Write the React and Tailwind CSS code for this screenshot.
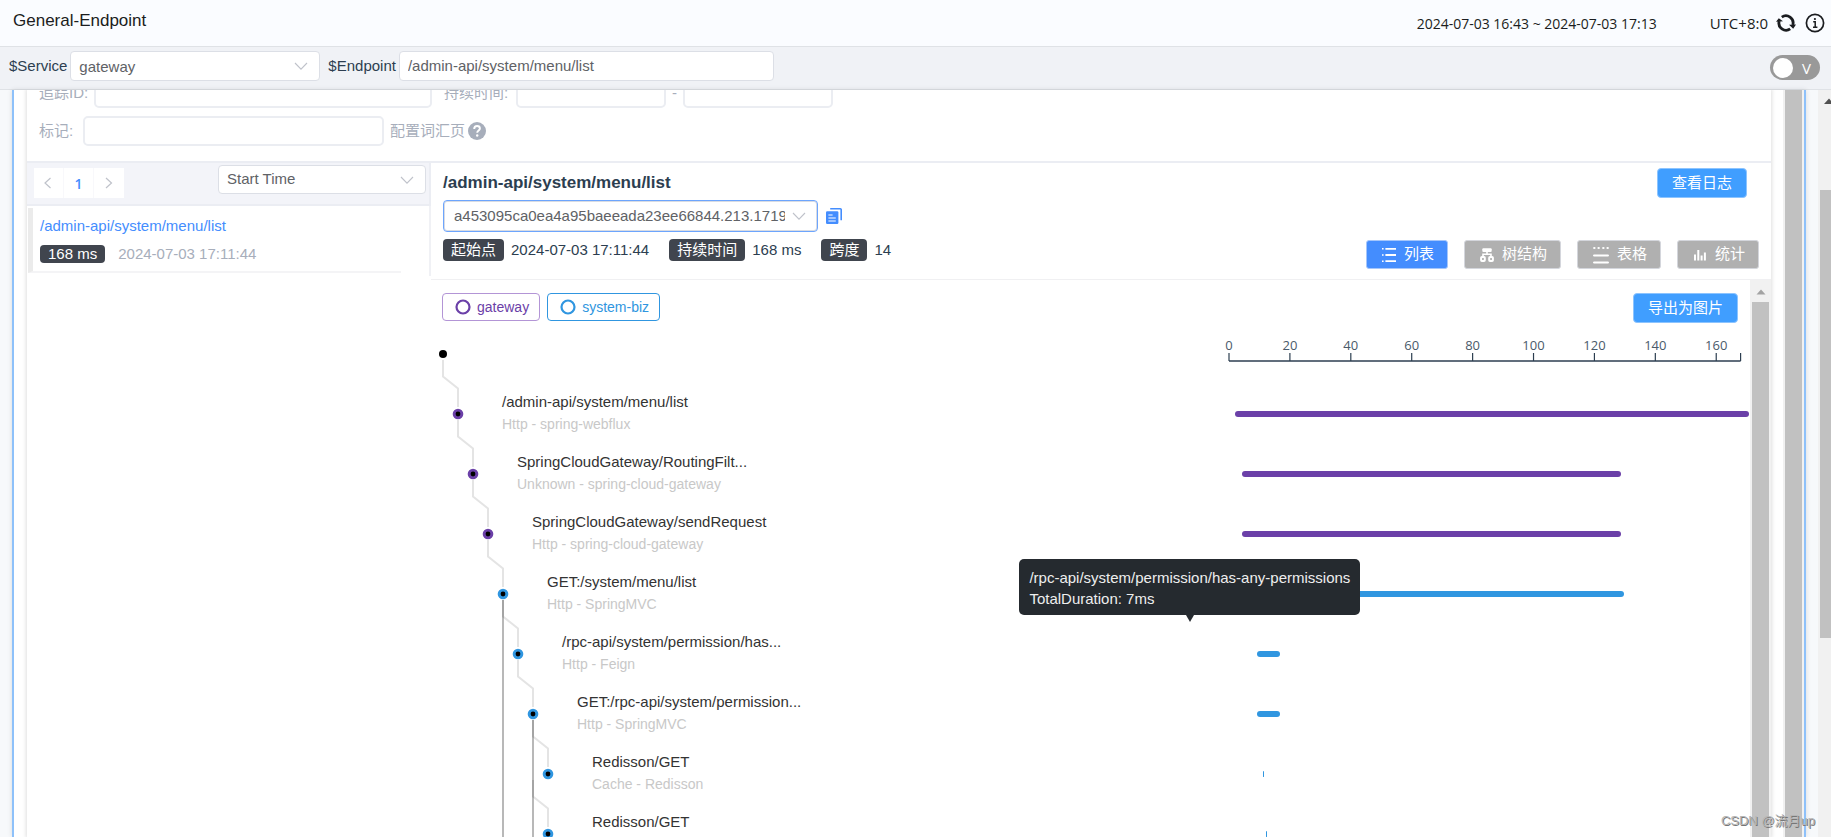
import React from "react";

const PURPLE = "#6b40a8";
const BLUE = "#3096e0";
const TOTAL = 168;

const spans = [
  { depth: 1, name: "/admin-api/system/menu/list", meta: "Http - spring-webflux", start: 0, duration: 168, color: PURPLE },
  { depth: 2, name: "SpringCloudGateway/RoutingFilt...", meta: "Unknown - spring-cloud-gateway", start: 2, duration: 124, color: PURPLE },
  { depth: 3, name: "SpringCloudGateway/sendRequest", meta: "Http - spring-cloud-gateway", start: 2, duration: 124, color: PURPLE },
  { depth: 4, name: "GET:/system/menu/list", meta: "Http - SpringMVC", start: 3, duration: 124, color: BLUE },
  {
    depth: 5,
    name: "/rpc-api/system/permission/has...",
    meta: "Http - Feign",
    start: 7,
    duration: 7.5,
    color: BLUE,
    tip: ["/rpc-api/system/permission/has-any-permissions", "TotalDuration: 7ms"],
  },
  { depth: 6, name: "GET:/rpc-api/system/permission...", meta: "Http - SpringMVC", start: 7, duration: 7.5, color: BLUE },
  { depth: 7, name: "Redisson/GET", meta: "Cache - Redisson", start: 9, duration: 0.4, color: BLUE },
  { depth: 7, name: "Redisson/GET", meta: "Cache - Redisson", start: 10, duration: 0.4, color: BLUE },
];

const ticks = [0, 20, 40, 60, 80, 100, 120, 140, 160];

function Chevron({ className }) {
  return (
    <svg viewBox="0 0 14 14" className={`pointer-events-none absolute top-1/2 size-[14px] -translate-y-1/2 ${className}`} fill="none" stroke="#bfc2ca" strokeWidth="1.1">
      <path d="M1 4l6 6.2L13 4" />
    </svg>
  );
}

function Select({ id, label, value, className, focused }) {
  return (
    <div className={`relative ${className}`}>
      <select
        id={id}
        aria-label={label}
        className={`block h-full w-full appearance-none overflow-hidden rounded-[4px] border bg-white pr-8 text-[15px] text-[#606266] outline-none ${
          focused ? "border-[#6da5fd] pl-2.5 shadow-[inset_0_0_0_1px_#d9dce3]" : "border-[#dcdfe6] pl-2"
        }`}
      >
        <option>{value}</option>
      </select>
      <Chevron className="right-3" />
    </div>
  );
}

function FilterInput({ id, label, className }) {
  return <input id={id} aria-label={label} className={`h-[30px] rounded-[5px] border-2 border-[#ebedf2] bg-white px-2 outline-none ${className}`} />;
}

function RefreshIcon() {
  return (
    <svg viewBox="0 0 20 20" className="size-5" fill="none" stroke="#1b1d20" strokeWidth="2.8">
      <path d="M14.200 15.900A7.200 7.200 0 0 1 3.200 8" />
      <path d="M5.800 4.100A7.200 7.200 0 0 1 16.800 12" />
      <path d="M0 8.800L2.800 5.200 7 8.200zM13 11.800l7-.4-2.800 4.400z" fill="#1b1d20" stroke="none" />
    </svg>
  );
}

function InfoIcon() {
  return (
    <svg viewBox="0 0 20 20" className="size-5" fill="none" stroke="#1b1d20">
      <circle cx="10" cy="10" r="8.6" strokeWidth="1.7" />
      <path d="M8.2 8.8h2v5.4M8 14.2h4.4" strokeWidth="1.5" />
      <circle cx="9.9" cy="6" r="1.1" fill="#1b1d20" stroke="none" />
    </svg>
  );
}

function CopyIcon() {
  return (
    <svg viewBox="0 0 16 16" className="size-4" fill="none">
      <path d="M4.2.8h10.2c.5 0 .8.3.8.8v10.6" stroke="#448dfe" strokeWidth="1.6" />
      <rect x="0" y="3.2" width="12.4" height="12.8" rx="1.2" fill="#448dfe" />
      <path d="M2.4 7h4.2M2.4 10h7.4M2.4 13h7.4" stroke="#fff" strokeWidth="1.2" />
    </svg>
  );
}

function ListIcon() {
  return (
    <svg viewBox="0 0 14 14" className="size-[14px]" fill="#fff">
      <path d="M0 0h1.6v1.6H0zM0 6.2h1.6v1.6H0zM0 12.4h1.6V14H0zM3.4 0H14v1.8H3.4zM3.4 6.1H14v1.8H3.4zM3.4 12.2H14V14H3.4z" />
    </svg>
  );
}

function TreeIcon() {
  return (
    <svg viewBox="0 0 14 14" className="size-[14px]" fill="none" stroke="#fff">
      <rect x="2.300" y="0.300" width="9.400" height="3.600" rx="1" fill="#fff" stroke="none" />
      <path d="M7 3.500v2.800M3 9V6.300h8V9" strokeWidth="1.600" />
      <rect x="1.100" y="8.900" width="3.700" height="4.100" rx=".8" strokeWidth="2" />
      <rect x="9.200" y="8.900" width="3.700" height="4.100" rx=".8" strokeWidth="2" />
    </svg>
  );
}

function TableIcon() {
  return (
    <svg viewBox="0 0 16 18" className="h-[18px] w-4" fill="none" stroke="#fff" strokeLinecap="round">
      <path d="M1.200 2h.3M5.500 2h.3M10.200 2h.3M14.500 2h.3" strokeWidth="2.200" />
      <path d="M1.100 9.500h13.800M1.100 16.500h13.800" strokeWidth="2.200" />
    </svg>
  );
}

function StatsIcon() {
  return (
    <svg viewBox="0 0 14 12" className="h-3 w-[14px]" fill="none" stroke="#fff" strokeWidth="2">
      <path d="M2 11.500v-6M5.300 11.500V1M8.600 11.500V6.500M11.900 11.500V3.400" />
    </svg>
  );
}

const modes = [
  { label: "列表", icon: ListIcon, active: true },
  { label: "树结构", icon: TreeIcon },
  { label: "表格", icon: TableIcon },
  { label: "统计", icon: StatsIcon },
];

function Tag({ children }) {
  return <span className="flex h-[22px] items-center rounded-[4px] bg-[#40454e] px-2 text-[15px] text-white">{children}</span>;
}

function Legend({ name, className }) {
  return (
    <span className={`flex h-7 items-center gap-1.5 rounded-[4px] border pr-2.5 pl-3 text-[14px] ${className}`}>
      <svg viewBox="0 0 16 16" className="size-4" fill="none" stroke="currentColor" strokeWidth="2.2">
        <circle cx="8" cy="8" r="6.5" />
      </svg>
      {name}
    </span>
  );
}

function Connectors() {
  const height = spans.length * 60 + 120;
  return (
    <svg width="240" height={height} className="pointer-events-none absolute top-0 left-0">
      {spans.map((n, i) => {
        const x = 12 + n.depth * 15;
        const y = 70 + i * 60;
        return <path key={i} d={`M${x - 15} ${y - 54}v16.500l15 12V${y - 7}`} fill="none" stroke="#e4e4e4" strokeWidth="2" />;
      })}
      <path d={`M72 256V${height}M102 376V${height}`} stroke="#000" strokeOpacity=".28" strokeWidth="2" />
      <circle cx="12" cy="10" r="4" />
      {spans.map((n, i) => {
        const x = 12 + n.depth * 15;
        const y = 70 + i * 60;
        return (
          <g key={i}>
            <circle cx={x} cy={y} r="5.300" fill={n.color} />
            <circle cx={x} cy={y} r="2.400" />
          </g>
        );
      })}
    </svg>
  );
}

function Axis() {
  return (
    <svg className="block h-7 w-full overflow-visible" fill="none">
      <line x1="0" x2="100%" y1="26" y2="26" stroke="#2c3e50" strokeWidth="1.500" />
      {[...ticks, TOTAL].map((t) => (
        <line key={t} x1={`${(t / TOTAL) * 100}%`} x2={`${(t / TOTAL) * 100}%`} y1="18" y2="26" stroke="#2c3e50" strokeWidth="1.200" />
      ))}
      {ticks.map((t) => (
        <text key={t} x={`${(t / TOTAL) * 100}%`} y="15" textAnchor="middle" fontSize="13" fill="#4a5a6a" className="font-['Open_Sans',sans-serif]">
          {t}
        </text>
      ))}
    </svg>
  );
}

function SpanRow({ span }) {
  const indent = 56 + span.depth * 15;
  return (
    <li className="flex h-[60px]">
      <div className="w-3/5 leading-[22px]" style={{ paddingLeft: indent }}>
        <div className="pt-[7px] text-[15px] text-[#333]">{span.name}</div>
        <div className="text-[14px] text-[#c8c8c8]">{span.meta}</div>
      </div>
      <div className="relative flex w-2/5 items-start pt-[27px] pr-px pl-[13px]">
        <div className="flex h-[6px] w-full">
          <div
            className="h-full rounded-[3px]"
            style={{ marginLeft: `${(span.start / TOTAL) * 100}%`, width: `${(span.duration / TOTAL) * 100}%`, backgroundColor: span.color }}
          />
        </div>
        {span.tip && (
          <div role="tooltip" className="absolute bottom-full left-[-203px] mb-[9px] rounded-[5px] bg-[#252a2f] px-2.5 pt-2 pb-1.5 text-[15px] leading-[21px] whitespace-nowrap text-[#eee]">
            {span.tip.map((line) => (
              <div key={line}>{line}</div>
            ))}
            <svg viewBox="0 0 8 7" className="absolute top-full left-1/2 h-[7px] w-2 -translate-x-1/2" fill="#252a2f">
              <path d="M0 0h8L4 7z" />
            </svg>
          </div>
        )}
      </div>
    </li>
  );
}

export default function App() {
  return (
    <div className="relative flex h-screen flex-col overflow-hidden bg-[#f7f9fb] font-['Liberation_Sans','Noto_Sans_CJK_SC',sans-serif] text-[15px] text-[#2c3e50]">
      <header className="flex h-[47px] shrink-0 items-center justify-between border-b border-[#dfe2e6] bg-[#fafcff] pr-1.5 pl-[13px] text-[#1b1d20]">
        <h1 className="pb-1 text-[17px]">General-Endpoint</h1>
        <div className="flex items-center font-['Open_Sans',sans-serif] text-[14px]">
          <span>2024-07-03 16:43 ~ 2024-07-03 17:13</span>
          <span className="pr-2 pl-[53px] text-[15px]">UTC+8:0</span>
          <button aria-label="Refresh" className="mr-[9px]">
            <RefreshIcon />
          </button>
          <button aria-label="Info">
            <InfoIcon />
          </button>
        </div>
      </header>

      <div className="flex h-[43px] shrink-0 items-start border-b border-[#dfe2e6] bg-[#f0f2f6] pt-1 pr-[11px] pl-[9px] leading-[30px]">
        <label htmlFor="service" className="pr-[3px]">$Service</label>
        <Select id="service" label="Service" value="gateway" className="h-[30px] w-[250px]" />
        <label htmlFor="endpoint" className="pr-[3px] pl-2">$Endpoint</label>
        <input id="endpoint" defaultValue="/admin-api/system/menu/list" className="h-[30px] w-[375px] rounded-[4px] border border-[#dcdfe6] bg-white px-2 text-[15px] text-[#606266] outline-none" />
        <button role="switch" aria-checked="false" aria-label="View mode" className="mt-1 ml-auto flex h-[25px] w-[50px] items-center justify-between rounded-full bg-[#999] pr-[9px] pl-[3px] font-['Open_Sans',sans-serif] text-[15px] text-white">
          <span className="size-5 rounded-full bg-white" />
          V
        </button>
      </div>

      <div className="flex min-h-0 flex-1">
        <main className="mr-3 ml-3 flex min-w-0 flex-1 overflow-hidden border-x-2 border-[#8ec1fa] bg-white shadow-[0_0_5px_rgba(0,0,0,0.12)]">
          <section className="mr-3 ml-[13px] flex min-w-0 flex-1 flex-col bg-white shadow-[0_0_4px_1px_rgba(0,0,0,0.13)]">
            <form className="-mt-3 shrink-0 border-b-2 border-[#ebedf3] px-3 pb-[15px] text-[#a7aebb]">
              <div className="flex h-[30px] items-center">
                <label htmlFor="trace-id" className="w-[55px]">追踪ID:</label>
                <FilterInput id="trace-id" label="追踪ID" className="w-[338px]" />
                <label htmlFor="min" className="w-[84px] pl-3">持续时间:</label>
                <FilterInput id="min" label="最小持续时间" className="w-[150px]" />
                <span className="w-[17px] text-center">-</span>
                <FilterInput id="max" label="最大持续时间" className="w-[150px]" />
              </div>
              <div className="mt-2 flex h-[30px] items-center">
                <label htmlFor="tags" className="w-11">标记:</label>
                <FilterInput id="tags" label="标记" className="w-[301px]" />
                <a href="#tags" className="flex items-center gap-[3px] pl-1.5">
                  配置词汇页
                  <svg viewBox="0 0 18 18" className="size-[18px]">
                    <circle cx="9" cy="9" r="9" fill="#a7aebb" />
                    <path d="M6.200 6.900C6.200 5.100 7.400 4 9.100 4s2.800 1 2.800 2.500c0 2-2.700 2.100-2.700 4.300" fill="none" stroke="#fff" strokeWidth="1.900" />
                    <circle cx="9.200" cy="13.500" r="1.200" fill="#fff" />
                  </svg>
                </a>
              </div>
            </form>

            <div className="flex min-h-0 flex-1">
              <aside className="w-[404px] shrink-0">
                <div className="flex h-[43px] items-start justify-between border-r-2 border-b-2 border-[#ebedf3] bg-[#f3f4f9] pt-0.5 pr-[3px] pl-[7px]">
                  <nav className="mt-[3px] flex">
                    <button aria-label="Previous page" className="flex h-[30px] w-[30px] items-center justify-center border-r border-[#f8f8fb] bg-white">
                      <svg viewBox="0 0 14 14" className="size-[14px]" fill="none" stroke="#bfc2ca" strokeWidth="1.200"><path d="M8.500 2L3 7l5.500 5" /></svg>
                    </button>
                    <button className="h-[30px] w-[30px] border-r border-[#f8f8fb] bg-white font-['Open_Sans',sans-serif] text-[14px] font-semibold text-[#448dfe]">1</button>
                    <button aria-label="Next page" className="flex h-[30px] w-[30px] items-center justify-center bg-white">
                      <svg viewBox="0 0 14 14" className="size-[14px]" fill="none" stroke="#bfc2ca" strokeWidth="1.200"><path d="M4 2l5.500 5L4 12" /></svg>
                    </button>
                  </nav>
                  <Select id="order" label="Order" value="Start Time" className="h-[29px] w-[208px]" />
                </div>
                <div className="flex h-[70px] border-r-2 border-[#f0f1f5] pt-0.5 pr-7">
                  <div className="ml-px flex h-[65px] w-full flex-col border-b-2 border-l-[5px] border-[#f4f4f6] border-l-[#ebebeb] pt-2 pl-[7px]">
                    <a href="#trace" className="leading-5 text-[#448dfe]">/admin-api/system/menu/list</a>
                    <div className="mt-[7px] flex items-center gap-[13px]">
                      <span className="flex h-[18px] items-center rounded-[4px] bg-[#40454e] px-2 text-white">168 ms</span>
                      <time className="text-[#a7aebb]">2024-07-03 17:11:44</time>
                    </div>
                  </div>
                </div>
              </aside>

              <div className="flex min-w-0 flex-1 flex-col">
                <div className="flex h-[117px] shrink-0 justify-between border-b border-[#f0f0f2] pl-3">
                  <div>
                    <h2 className="pt-2 text-[17px] leading-6 font-bold">/admin-api/system/menu/list</h2>
                    <div className="mt-[5px] flex items-center gap-2">
                      <Select id="trace" label="Trace" value="a453095ca0ea4a95baeeada23ee66844.213.17199979045710001" focused className="h-8 w-[375px]" />
                      <button aria-label="Copy"><CopyIcon /></button>
                    </div>
                    <div className="mt-[7px] flex items-center">
                      <Tag>起始点</Tag>
                      <span className="pr-5 pl-[7px]">2024-07-03 17:11:44</span>
                      <Tag>持续时间</Tag>
                      <span className="pr-5 pl-[7px]">168 ms</span>
                      <Tag>跨度</Tag>
                      <span className="pl-[7px]">14</span>
                    </div>
                  </div>
                  <div className="flex flex-col items-end justify-between pt-[5px] pr-3 pb-2.5">
                    <button className="mr-3 h-[30px] rounded-[4px] border border-[#8cc4ff] bg-[#409eff] px-3.5 text-white">查看日志</button>
                    <div className="flex gap-4">
                      {modes.map(({ label, icon: Icon, active }) => (
                        <button key={label} className={`flex h-[29px] items-center gap-2 rounded-[3px] border pr-[13px] pl-[15px] text-white ${active ? "border-[#a5c6fb] bg-[#448dfe]" : "border-[#d4d6dc] bg-[#b0b0b0]"}`}>
                          <Icon />
                          {label}
                        </button>
                      ))}
                    </div>
                  </div>
                </div>

                <div className="flex min-h-0 flex-1 overflow-hidden">
                  <div className="min-w-0 flex-1">
                    <div className="flex justify-between pt-[13px] pr-3 pl-[11px]">
                      <div className="flex gap-[7px]">
                        <Legend name="gateway" className="border-[#b395d6] text-[#6b40a8]" />
                        <Legend name="system-biz" className="border-[#3096e0] text-[#3096e0]" />
                      </div>
                      <button className="h-[30px] rounded-[4px] border border-[#8cc4ff] bg-[#409eff] px-3.5 text-white">导出为图片</button>
                    </div>
                    <div className="flex justify-end pt-3">
                      <div className="w-2/5 pr-[9px] pl-[7px]">
                        <Axis />
                      </div>
                    </div>
                    <div className="relative -mt-[19px]">
                      <Connectors />
                      <ul className="pt-10">
                        {spans.map((span, i) => (
                          <SpanRow key={i} span={span} />
                        ))}
                      </ul>
                    </div>
                  </div>
                  <div className="flex w-[21px] shrink-0 flex-col bg-[#f1f1f1]">
                    <svg viewBox="0 0 21 22" className="h-[22px] w-[21px] shrink-0" fill="#a3a3a3"><path d="M6.500 14.500h9l-4.500-5z" /></svg>
                    <div className="mr-0.5 ml-0.5 flex-1 bg-[#c1c1c1]" />
                  </div>
                </div>
              </div>
            </div>
          </section>
          <div className="flex w-[21px] shrink-0 bg-[#f1f1f1] px-0.5">
            <div className="flex-1 bg-[#c1c1c1]" />
          </div>
        </main>
        <div className="flex w-[13px] shrink-0 flex-col bg-[#f1f1f1] pl-0.5">
          <svg viewBox="0 0 11 100" className="h-[100px] w-[11px] shrink-0" fill="#505050"><path d="M4 14h10L9 8.500z" /></svg>
          <div className="h-3/5 bg-[#c1c1c1]" />
        </div>
      </div>

      <div className="absolute right-4 bottom-[7px] text-[13px] text-[#b5b5b5] [text-shadow:1px_1px_0_#777]">CSDN @流月up</div>
    </div>
  );
}
